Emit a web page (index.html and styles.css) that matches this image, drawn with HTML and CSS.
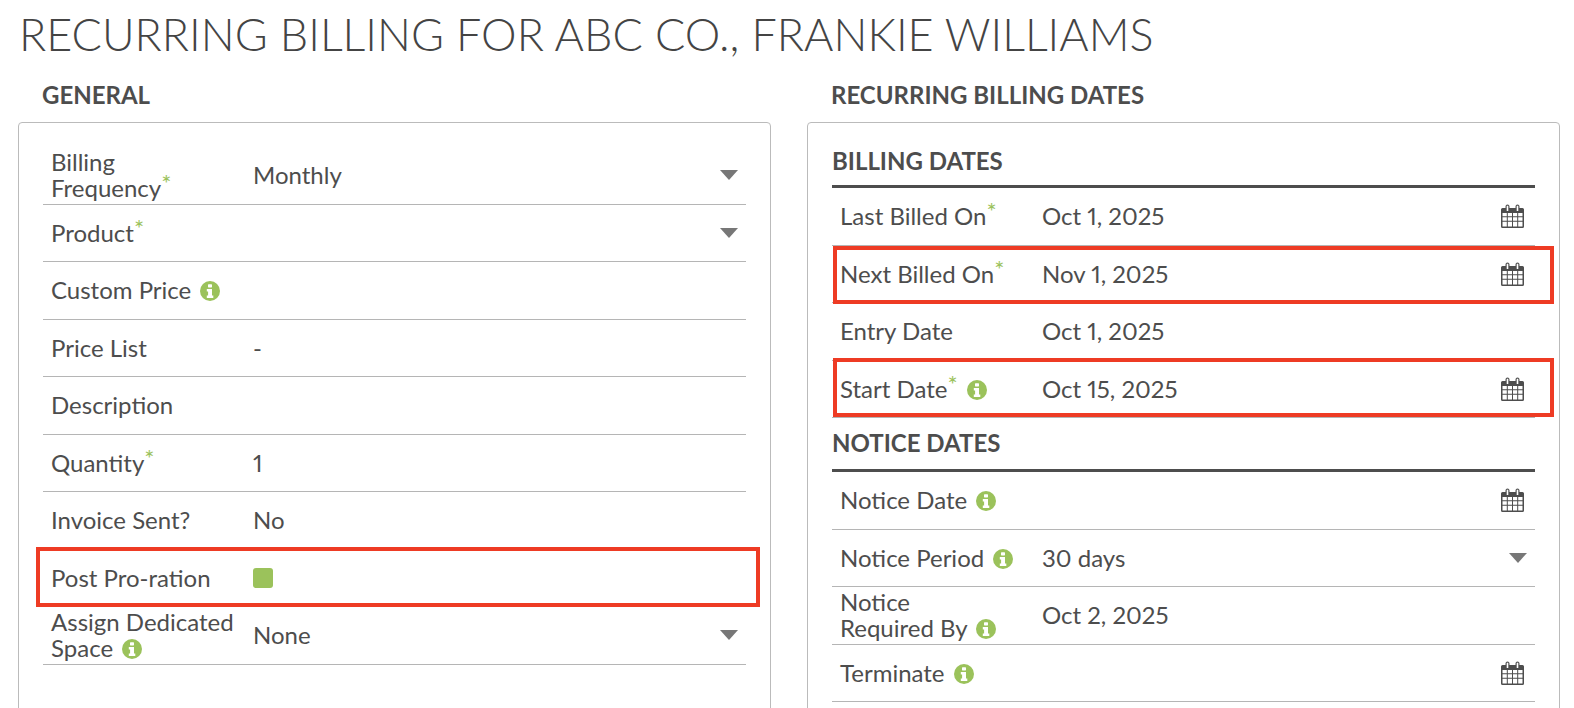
FILE: index.html
```html
<!DOCTYPE html>
<html lang="en">
<head>
    <meta charset="UTF-8">
    <meta name="viewport" content="width=device-width, initial-scale=1.0">
    <title>Recurring Billing</title>
    <link rel="stylesheet" href="styles.css">
</head>
<body>
    <svg class="sprites" width="0" height="0">
        <symbol id="info" viewBox="0 0 20 20">
            <circle cx="10" cy="10" r="10" fill="#9bc25b"/>
            <rect x="8" y="3.2" width="4" height="3.2" rx=".6" fill="#fff"/>
            <path d="M6.8 8h5.2v6.4h1.3V17H6.8v-2.6h1.3v-3.8H6.8z" fill="#fff"/>
        </symbol>
        <symbol id="cal" viewBox="0 0 23 24">
            <path d="M1.5 4h3V2.6a2 2 0 0 1 4 0V4h6V2.6a2 2 0 0 1 4 0V4h3A1.5 1.5 0 0 1 23 5.500V22.500A1.500 1.500 0 0 1 21.500 24H1.500A1.500 1.500 0 0 1 0 22.500V5.500A1.500 1.500 0 0 1 1.500 4z" fill="#4d4d4d"/>
            <path d="M5.700 1.800h1.600v5.200H5.700zM15.700 1.800h1.600v5.200h-1.600z" fill="#fff"/>
            <path d="M1.500 9h4.300v3.200H1.500zM6.800 9h4.200v3.200H6.800zM12 9h4.200v3.200H12zM17.200 9h4.300v3.200h-4.300zM1.500 13.200h4.300v3.600H1.500zM6.800 13.200h4.200v3.600H6.800zM12 13.200h4.200v3.600H12zM17.200 13.200h4.300v3.600h-4.300zM1.500 17.800h4.300v4.700H1.500zM6.800 17.800h4.200v4.700H6.800zM12 17.800h4.200v4.700H12zM17.200 17.800h4.300v4.700h-4.300z" fill="#fff"/>
        </symbol>
    </svg>

    <h1>Recurring Billing for ABC Co., Frankie Williams</h1>

    <div class="columns">
        <section>
            <h2>General</h2>
            <div class="panel">
                <div class="row">
                    <div class="label">Billing<br>Frequency<sup>*</sup></div>
                    <div class="value">Monthly</div>
                    <span class="caret"></span>
                </div>
                <div class="row">
                    <div class="label">Product<sup>*</sup></div>
                    <div class="value"></div>
                    <span class="caret"></span>
                </div>
                <div class="row">
                    <div class="label">Custom Price <svg class="info"><use href="#info"/></svg></div>
                    <div class="value"></div>
                </div>
                <div class="row">
                    <div class="label">Price List</div>
                    <div class="value">-</div>
                </div>
                <div class="row">
                    <div class="label">Description</div>
                    <div class="value"></div>
                </div>
                <div class="row">
                    <div class="label">Quantity<sup>*</sup></div>
                    <div class="value">1</div>
                </div>
                <div class="row">
                    <div class="label">Invoice Sent?</div>
                    <div class="value">No</div>
                </div>
                <div class="row mark mark-left">
                    <div class="label">Post Pro-ration</div>
                    <div class="value"><span class="check"></span></div>
                </div>
                <div class="row">
                    <div class="label">Assign Dedicated<br>Space <svg class="info"><use href="#info"/></svg></div>
                    <div class="value">None</div>
                    <span class="caret"></span>
                </div>
            </div>
        </section>

        <section>
            <h2>Recurring Billing Dates</h2>
            <div class="panel">
                <h3>Billing Dates</h3>
                <div class="row">
                    <div class="label">Last Billed On<sup>*</sup></div>
                    <div class="value">Oct 1, 2025</div>
                    <svg class="cal"><use href="#cal"/></svg>
                </div>
                <div class="row mark mark-next">
                    <div class="label">Next Billed On<sup>*</sup></div>
                    <div class="value">Nov 1, 2025</div>
                    <svg class="cal"><use href="#cal"/></svg>
                </div>
                <div class="row">
                    <div class="label">Entry Date</div>
                    <div class="value">Oct 1, 2025</div>
                </div>
                <div class="row mark mark-start">
                    <div class="label">Start Date<sup>*</sup> <svg class="info"><use href="#info"/></svg></div>
                    <div class="value">Oct 15, 2025</div>
                    <svg class="cal"><use href="#cal"/></svg>
                </div>
                <h3 class="second">Notice Dates</h3>
                <div class="row">
                    <div class="label">Notice Date <svg class="info"><use href="#info"/></svg></div>
                    <div class="value"></div>
                    <svg class="cal"><use href="#cal"/></svg>
                </div>
                <div class="row">
                    <div class="label">Notice Period <svg class="info"><use href="#info"/></svg></div>
                    <div class="value">30 days</div>
                    <span class="caret"></span>
                </div>
                <div class="row">
                    <div class="label">Notice<br>Required By <svg class="info"><use href="#info"/></svg></div>
                    <div class="value">Oct 2, 2025</div>
                </div>
                <div class="row">
                    <div class="label">Terminate <svg class="info"><use href="#info"/></svg></div>
                    <div class="value"></div>
                    <svg class="cal"><use href="#cal"/></svg>
                </div>
            </div>
        </section>
    </div>
</body>
</html>
```

FILE: styles.css
```css
html, body { height: 100%; }
body { margin: 0; padding: 0 15px 0 18px; overflow: hidden; background-color: #fff; color: #4d4d4d; font-family: Lato, "Open Sans", sans-serif; font-size: 24px; font-variant-numeric: proportional-nums; }
.sprites { position: absolute; }
h1 { margin: 0 0 0 1px; padding-top: 7px; height: 67px; box-sizing: border-box; font-size: 44.900px; line-height: 54px; font-weight: 300; color: #444; text-transform: uppercase; white-space: nowrap; }
h2 { margin: 0 0 0 24px; height: 55px; font-size: 24px; line-height: 56px; font-weight: 700; text-transform: uppercase; }
h3 { margin: 0; height: 41px; box-sizing: border-box; border-bottom: 3px solid #4d4d4d; font-size: 24px; line-height: 28px; font-weight: 700; text-transform: uppercase; }
h3.second { height: 54px; padding-top: 11px; }
.columns { display: grid; grid-template-columns: 753px 753px; column-gap: 36px; }
.panel { height: 700px; box-sizing: border-box; padding: 24px 24px 0; border: 1px solid #bbb; border-radius: 4px; }
.row { display: flex; align-items: center; height: 57.5px; box-sizing: border-box; padding-left: 8px; border-bottom: 1px solid #b5b5b5; position: relative; line-height: 26px; }
.label { width: 202px; flex: none; }
.value { flex: 1; }
sup { color: #9bc25b; font-size: 24px; line-height: 0; vertical-align: 5px; }
.info { width: 20px; height: 20px; margin-left: 3px; vertical-align: -2px; }
.caret { width: 0; height: 0; margin-right: 8px; border-left: 9.500px solid transparent; border-right: 9.500px solid transparent; border-top: 10px solid #777; }
.cal { width: 23px; height: 24px; margin-right: 11px; }
.check { display: block; width: 20px; height: 20px; border-radius: 3px; background-color: #9bc25b; }
.mark::after { content: ""; position: absolute; border: 4px solid #ee3b24; pointer-events: none; }
.mark-left::after { left: -7px; right: -14px; top: -3px; bottom: -1px; }
.mark-next::after { left: 1px; right: -19px; top: 0; bottom: -2px; }
.mark-start::after { left: 1px; right: -19px; top: -3px; bottom: 0; }
```
